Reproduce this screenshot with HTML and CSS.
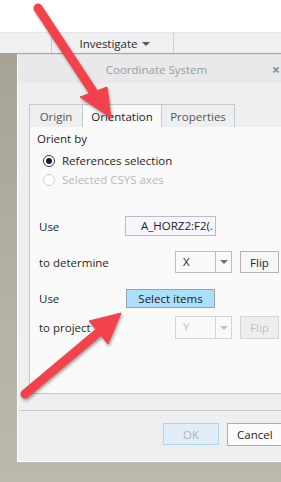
FILE: index.html
```html
<!DOCTYPE html>
<html>
<head>
<meta charset="utf-8">
<link rel="stylesheet" href="styles.css">
</head>
<body>
<div class="page">
  <div class="top"></div>
  <div class="toolbar">
    <div class="tb-cell tb-first"></div>
    <div class="tb-cell tb-inv"><span>Investigate</span><span class="caret"></span></div>
    <div class="tb-cell tb-rest"></div>
  </div>
  <div class="desk">
    <div class="dialog">
      <div class="titlebar">
        <span class="title">Coordinate System</span>
        <span class="close">×</span>
      </div>
      <div class="dbody">
        <div class="tabs">
          <div class="tab t-origin">Origin</div>
          <div class="tab t-orient active">Orientation</div>
          <div class="tab t-props">Properties</div>
        </div>
        <div class="panel">
          <div class="orient-by">Orient by</div>
          <div class="radio-row">
            <span class="radio checked"></span><span>References selection</span>
          </div>
          <div class="radio-row disabled">
            <span class="radio"></span><span>Selected CSYS axes</span>
          </div>
          <div class="row row-use1">
            <span class="lbl">Use</span>
            <div class="ref-input">A_HORZ2:F2(.</div>
          </div>
          <div class="row row-det">
            <span class="lbl">to determine</span>
            <div class="ctrls">
              <div class="select"><span class="sel-val">X</span><span class="sel-btn"><span class="tri"></span></span></div>
              <div class="btn flip">Flip</div>
            </div>
          </div>
          <div class="row row-use2">
            <span class="lbl">Use</span>
            <div class="select-items">Select items</div>
          </div>
          <div class="row row-proj">
            <span class="lbl">to project</span>
            <div class="ctrls dis">
              <div class="select"><span class="sel-val">Y</span><span class="sel-btn"><span class="tri"></span></span></div>
              <div class="btn flip">Flip</div>
            </div>
          </div>
        </div>
      </div>
      <div class="sep"></div>
      <div class="footer">
        <div class="btn ok">OK</div>
        <div class="btn cancel">Cancel</div>
      </div>
    </div>
  </div>
  <svg class="arrows" width="281" height="482" viewBox="0 0 281 482">
    <g class="arrow">
      <line x1="38" y1="8" x2="94" y2="93" />
      <polygon points="80,97 107,87 111,118" />
    </g>
    <g class="arrow">
      <line x1="25" y1="394" x2="99" y2="332" />
      <polygon points="89,321 121,313 108,344" />
    </g>
  </svg>
</div>
</body>
</html>
```

FILE: styles.css
```css
* { box-sizing: border-box; }
html, body { margin: 0; padding: 0; }
body {
  width: 281px;
  height: 482px;
  overflow: hidden;
  background: #ffffff;
  font-family: "Open Sans", "Noto Sans", sans-serif;
  font-size: 11px;
  color: #1e1e1e;
}
.page { position: relative; width: 281px; height: 482px; overflow: hidden; }
.top { height: 32px; background: #ffffff; }
.toolbar {
  height: 21px;
  display: flex;
  background: #eef0f2;
  border-top: 1px solid #e4e6e8;
}
.tb-cell { height: 100%; }
.tb-first { width: 52px; border-right: 1px solid #cdd0d3; }
.tb-inv {
  width: 122px;
  border-right: 1px solid #cdd0d3;
  display: flex;
  align-items: center;
  justify-content: center;
  gap: 4px;
  font-size: 11.5px;
  color: #2a2a2a;
  padding-left: 4px;
}
.caret {
  width: 0; height: 0;
  border-left: 4px solid transparent;
  border-right: 4px solid transparent;
  border-top: 4px solid #5a5a5a;
  margin-top: 1px;
}
.tb-rest { flex: 1; }

.desk {
  height: 429px;
  background: linear-gradient(#a7a496, #bcbaae);
  padding: 1px 0 0 17px;
  overflow: hidden;
}
.dialog {
  width: 278px;
  height: 408px;
  background: #eeeff1;
  border-left: 1px solid #ffffff;
  border-bottom: 1px solid #ffffff;
  border-top: 1px solid #dfe1e3;
}
.titlebar {
  height: 28px;
  background: #e7e9eb;
  display: flex;
  align-items: center;
  justify-content: center;
  position: relative;
}
.title { color: #9c9c9c; font-size: 11.5px; }
.close {
  position: absolute;
  right: 15px;
  top: 5px;
  color: #8d8d8d;
  font-weight: bold;
  font-size: 14px;
}
.dbody { padding: 21px 0 0 11px; }
.tabs { display: flex; height: 23px; }
.tab {
  height: 23px;
  border: 1px solid #c8c8c8;
  border-bottom: none;
  display: flex;
  align-items: center;
  justify-content: center;
  font-size: 11.5px;
  color: #555;
  background: #eeeff1;
}
.t-origin { width: 53px; border-right: none; }
.t-orient { width: 80px; background: #fafafa; color: #1a1a1a; }
.t-props { width: 73px; border-left: none; }
.panel {
  width: 280px;
  height: 267px;
  background: #fafafa;
  border: 1px solid #c8c8c8;
  border-top: none;
  padding: 4px 0 0 7px;
  font-size: 11.5px;
}
.orient-by { height: 16px; line-height: 16px; }
.radio-row {
  display: flex;
  align-items: center;
  height: 19px;
  padding-left: 6px;
  gap: 7px;
}
.orient-by + .radio-row { margin-top: 4px; }
.radio {
  width: 12px; height: 12px;
  border-radius: 50%;
  border: 1px solid #3a3a3a;
  background: #fff;
  display: flex;
  align-items: center;
  justify-content: center;
}
.radio.checked::after {
  content: "";
  width: 6px; height: 6px;
  border-radius: 50%;
  background: #1e1e1e;
}
.radio-row.disabled { color: #b8b8b8; }
.radio-row.disabled .radio { border-color: #d2d2d2; }

.row { display: flex; align-items: center; }
.lbl { width: 88px; padding-left: 2px; }
.row-use1 { margin-top: 27px; height: 20px; }
.ref-input {
  width: 91px; height: 20px;
  background: #f7f5fd;
  border: 1px solid #bdb8cc;
  padding-left: 15px;
  line-height: 18px;
  white-space: nowrap;
  overflow: hidden;
}
.row-det { margin-top: 15px; height: 22px; }
.ctrls { display: flex; margin-left: 50px; gap: 8px; }
.select {
  width: 57px; height: 22px;
  border: 1px solid #bcbcbc;
  background: #fafafa;
  display: flex;
}
.sel-val { flex: 1; padding-left: 7px; line-height: 20px; }
.sel-btn {
  width: 16px;
  border-left: 1px solid #bcbcbc;
  display: flex; align-items: center; justify-content: center;
}
.tri {
  width: 0; height: 0;
  border-left: 4px solid transparent;
  border-right: 4px solid transparent;
  border-top: 4px solid #6e6e6e;
}
.btn {
  display: flex; align-items: center; justify-content: center;
  border: 1px solid #b4b4b4;
  background: #f7f7f7;
}
.flip { width: 39px; height: 22px; }
.row-use2 { margin-top: 16px; height: 19px; }
.select-items {
  margin-left: 1px;
  width: 89px; height: 19px;
  background: #acdff9;
  border: 1px solid #9aa0a6;
  display: flex; align-items: center; justify-content: center;
  color: #1a1a1a;
}
.row-proj { margin-top: 8px; height: 23px; }
.dis { color: #c2c2c2; }
.dis .select { border-color: #d6d6d6; height: 23px; }
.dis .sel-btn { border-color: #d6d6d6; }
.dis .tri { border-top-color: #c0c0c0; }
.dis .flip { border-color: #d6d6d6; background: #eeeeee; height: 23px; }

.sep {
  margin-top: 16px;
  height: 1px;
  background: #c8c9cb;
  margin-left: 1px;
}
.footer {
  display: flex;
  padding-left: 145px;
  margin-top: 12px;
  gap: 8px;
  font-size: 11.5px;
}
.ok {
  width: 56px; height: 22px;
  background: #e1eef9;
  border: 1px solid #aad6f4;
  color: #b2b2b2;
}
.cancel {
  width: 62px; height: 23px;
  background: #fcfcfc;
  border: 1px solid #adadad;
  justify-content: flex-start;
  padding-left: 9px;
  color: #1e1e1e;
}

.arrows {
  position: absolute;
  left: 0; top: 0;
  pointer-events: none;
}
.arrow {
  filter: drop-shadow(1px 2px 1.5px rgba(0,0,0,0.35));
}
.arrow line { stroke: #f2434c; stroke-width: 9; stroke-linecap: round; }
.arrow polygon { fill: #f2434c; stroke: #f2434c; stroke-width: 1; stroke-linejoin: round; }
```
